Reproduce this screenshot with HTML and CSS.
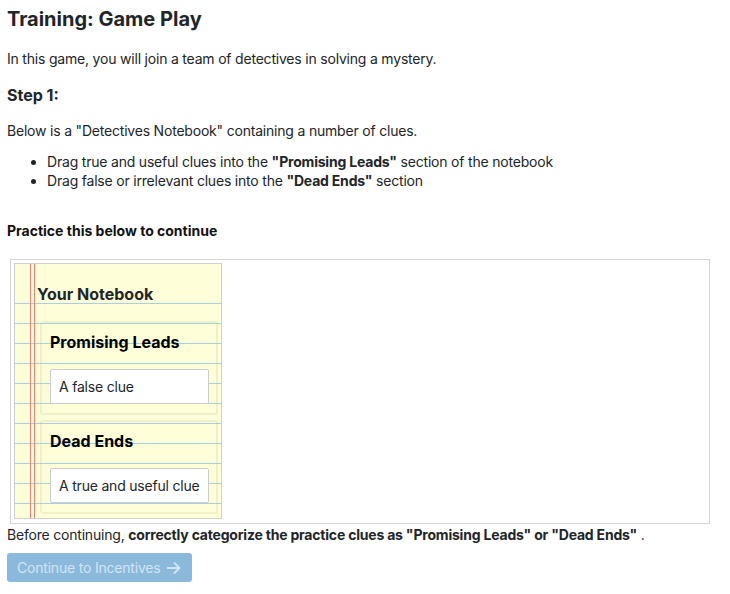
FILE: index.html
```html
<!DOCTYPE html>
<html lang="en">
<head>
<meta charset="utf-8">
<title>Training: Game Play</title>
<link rel="stylesheet" href="styles.css">
</head>
<body>
<h1 class="title">Training: Game Play</h1>
<p class="intro">In this game, you will join a team of detectives in solving a mystery.</p>
<h2 class="step">Step 1:</h2>
<p class="desc">Below is a "Detectives Notebook" containing a number of clues.</p>
<ul class="rules">
  <li>Drag true and useful clues into the <b>"Promising Leads"</b> section of the notebook</li>
  <li>Drag false or irrelevant clues into the <b>"Dead Ends"</b> section</li>
</ul>
<p class="practice">Practice this below to continue</p>
<div class="frame">
  <div class="notebook">
    <div class="nb-title">Your Notebook</div>
    <div class="section">
      <div class="section-title">Promising Leads</div>
      <div class="clue">A false clue</div>
    </div>
    <div class="section">
      <div class="section-title">Dead Ends</div>
      <div class="clue">A true and useful clue</div>
    </div>
  </div>
</div>
<p class="note">Before continuing, <b>correctly categorize the practice clues as "Promising Leads" or "Dead Ends"</b> .</p>
<button class="continue" disabled>Continue to Incentives
  <svg class="arrow" width="16" height="16" viewBox="0 0 16 16" aria-hidden="true"><path d="M1.5 8h12M8.5 3 13.5 8l-5 5" fill="none" stroke="currentColor" stroke-width="1.8" stroke-linecap="round" stroke-linejoin="round"/></svg>
</button>
</body>
</html>
```

FILE: styles.css
```css
* { box-sizing: border-box; }
body {
  margin: 0;
  padding: 7px 7px 0;
  font-family: Inter, "Noto Sans", "Liberation Sans", sans-serif;
  font-size: 14px;
  letter-spacing: -0.2px;
  color: #212529;
  background: #fff;
}
.title {
  margin: 0;
  font-size: 20px;
  line-height: 24px;
  font-weight: 700;
  letter-spacing: 0;
}
.intro {
  margin: 18px 0 0;
  line-height: 20px;
}
.step {
  margin: 16px 0 0;
  font-size: 16px;
  line-height: 20px;
  font-weight: 700;
  letter-spacing: 0;
}
.desc {
  margin: 16px 0 0;
  line-height: 20px;
}
.rules {
  margin: 11px 0 0;
  padding-left: 40px;
  line-height: 19px;
}
.rules b { font-weight: 700; }
.practice {
  margin: 31px 0 0;
  line-height: 20px;
  font-weight: 700;
  letter-spacing: 0;
  color: #111;
}
.frame {
  margin: 18px 0 0 3px;
  width: 700px;
  border: 1px solid #d4d4d4;
  padding: 3px 3px 4px;
}
.notebook {
  width: 208px;
  border: 1px solid #cfcfcf;
  padding: 0 3px 4px 0;
  background-color: #fefed9;
  background-image:
    linear-gradient(to right, transparent 15px, #f4806f 15px, #f4806f 16px, transparent 16px, transparent 19px, #f4806f 19px, #f4806f 20px, transparent 20px),
    linear-gradient(#fefed9, #fefed9),
    repeating-linear-gradient(to bottom, transparent 0, transparent 19px, #a9cfe0 19px, #a9cfe0 20px);
  background-size: 100% 100%, 100% 39px, 100% 100%;
  background-repeat: no-repeat;
}
.nb-title {
  padding: 20px 0 0 22px;
  font-size: 16px;
  line-height: 20px;
  font-weight: 700;
  letter-spacing: 0;
  margin-bottom: 17px;
}
.section {
  margin: 0 0 5px 25px;
  border: 2px solid rgba(180, 180, 120, 0.18);
  border-radius: 3px;
  padding: 9px 7px 9px 8px;
}
.section:last-child { margin-bottom: 0; }
.section-title {
  font-size: 16px;
  line-height: 20px;
  font-weight: 700;
  letter-spacing: 0;
  color: #000;
  margin-bottom: 17px;
}
.clue {
  background: #fff;
  border: 1px solid #cccccc;
  border-radius: 2px;
  padding: 7px 6px 7px 8px;
  font-size: 14px;
  line-height: 19px;
  white-space: nowrap;
}
.note {
  margin: 1px 0 0;
  line-height: 20px;
}
.note b { font-weight: 700; }
.continue {
  margin-top: 8px;
  display: inline-flex;
  align-items: center;
  gap: 6px;
  height: 29px;
  padding: 0 10px 0 10px;
  border: 0;
  border-radius: 3px;
  background: #8ab9dc;
  color: #d2e5f3;
  font-family: inherit;
  font-size: 14px;
  letter-spacing: -0.2px;
}
.arrow { display: block; }
```
